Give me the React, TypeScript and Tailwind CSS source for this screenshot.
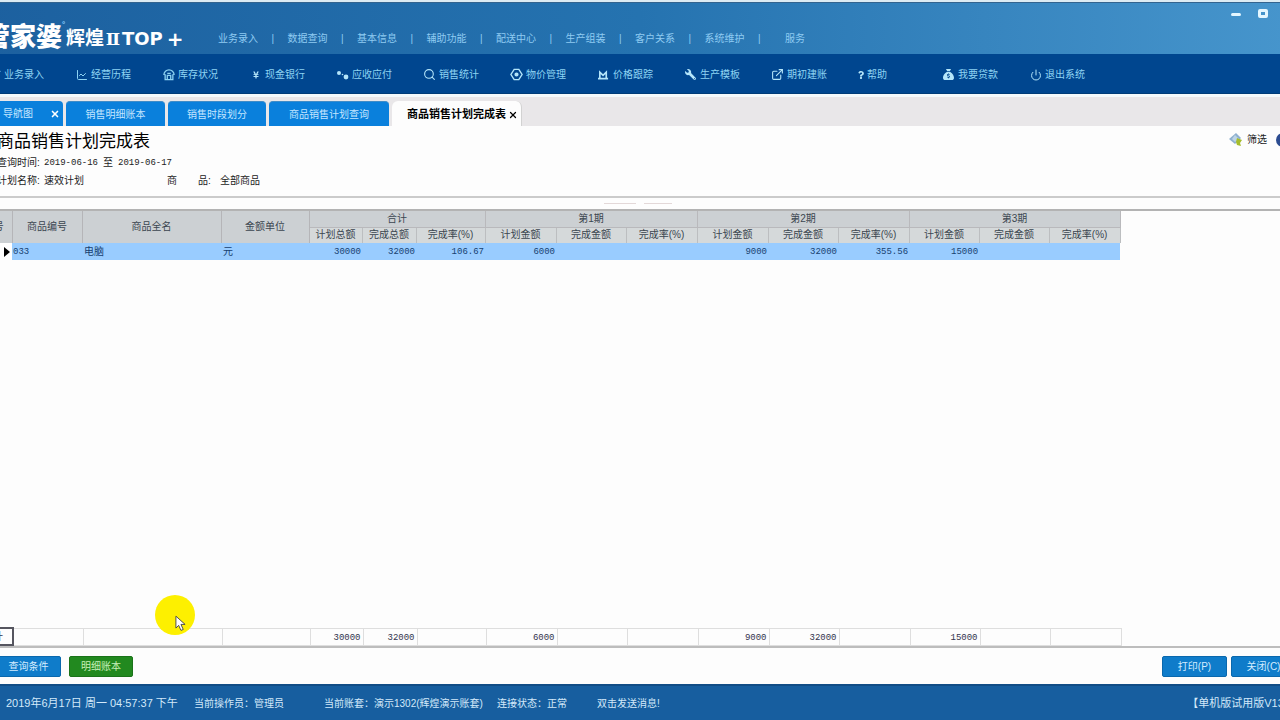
import React, { useState } from "react";
import { FaQuestion, FaWrench, FaYenSign } from "react-icons/fa";
import { FaSackDollar } from "react-icons/fa6";
import { ChartLine, ExternalLink, Pencil, Power, Search, X } from "lucide-react";

const menus = [
  "业务录入",
  "数据查询",
  "基本信息",
  "辅助功能",
  "配送中心",
  "生产组装",
  "客户关系",
  "系统维护",
];

function DotsIcon() {
  return (
    <svg viewBox="0 0 14 12" className="w-[14px] h-3" fill="currentColor">
      <circle cx="3" cy="4" r="2" />
      <circle cx="10" cy="8" r="2.4" />
      <circle cx="6.5" cy="5.5" r="0.8" />
    </svg>
  );
}

function HexIcon() {
  return (
    <svg
      viewBox="0 0 14 14"
      className="w-[13px] h-[13px]"
      fill="none"
      stroke="currentColor"
      strokeWidth="1.5"
    >
      <path d="M4.5 1.5 H9.5 L13 7 L9.5 12.5 H4.5 L1 7 Z" />
      <circle cx="7" cy="7" r="1.5" fill="currentColor" />
    </svg>
  );
}

function TrackIcon() {
  return (
    <svg
      viewBox="0 0 12 12"
      className="w-[11px] h-[11px]"
      fill="none"
      stroke="currentColor"
      strokeWidth="1.8"
    >
      <path d="M2 10 V3.5 L5.5 7 L9 3.5 V10 M0 10.5 H11" />
    </svg>
  );
}

function HomeIcon() {
  return (
    <svg
      viewBox="0 0 14 14"
      className="w-3 h-3"
      fill="none"
      stroke="currentColor"
      strokeWidth="1.5"
    >
      <path d="M1 7 C1 3.5 4 1 7 1 C10 1 13 3.5 13 7 M2.5 6 V12.5 H11.5 V6" />
      <path d="M5 12 V7.5 H9 V12 M5 5 H9" />
    </svg>
  );
}

const tools = [
  { label: "业务录入", icon: <Pencil className="w-3 h-3" /> },
  { label: "经营历程", icon: <ChartLine className="w-3 h-3" /> },
  { label: "库存状况", icon: <HomeIcon /> },
  { label: "现金银行", icon: <FaYenSign className="w-2 h-2" /> },
  { label: "应收应付", icon: <DotsIcon /> },
  { label: "销售统计", icon: <Search className="w-[13px] h-[13px]" /> },
  { label: "物价管理", icon: <HexIcon /> },
  { label: "价格跟踪", icon: <TrackIcon /> },
  { label: "生产模板", icon: <FaWrench className="w-[11px] h-[11px] -scale-x-100" /> },
  { label: "期初建账", icon: <ExternalLink className="w-[13px] h-[13px]" /> },
  { label: "帮助", icon: <FaQuestion className="w-2 h-2" />, narrow: true },
  { label: "我要贷款", icon: <FaSackDollar className="w-[11px] h-[11px]" /> },
  { label: "退出系统", icon: <Power className="w-3 h-3" /> },
];

const tabs = [
  { label: "销售明细账本", width: "w-[99px]" },
  { label: "销售时段划分", width: "w-[98px]" },
  { label: "商品销售计划查询", width: "w-[120px]" },
];

const groups = [
  { title: "合计", cols: ["计划总额", "完成总额", "完成率(%)"] },
  { title: "第1期", cols: ["计划金额", "完成金额", "完成率(%)"] },
  { title: "第2期", cols: ["计划金额", "完成金额", "完成率(%)"] },
  { title: "第3期", cols: ["计划金额", "完成金额", "完成率(%)"] },
];

const values = ["30000", "32000", "106.67", "6000", "", "", "9000", "32000", "355.56", "15000", "", ""];
const totals = ["30000", "32000", "", "6000", "", "", "9000", "32000", "", "15000", "", ""];

function Columns() {
  return (
    <colgroup>
      <col className="w-9" />
      <col className="w-[70px]" />
      <col className="w-[139px]" />
      <col className="w-[88px]" />
      <col className="w-[53px]" />
      <col className="w-[54px]" />
      <col className="w-[69px]" />
      <col className="w-[71px]" />
      <col className="w-[70px]" />
      <col className="w-[71px]" />
      <col className="w-[71px]" />
      <col className="w-[70px]" />
      <col className="w-[71px]" />
      <col className="w-[70px]" />
      <col className="w-[70px]" />
      <col className="w-[71px]" />
    </colgroup>
  );
}

function Header() {
  return (
    <header className="border-t-2 border-[#dcebf3]">
      <div className="h-[52px] flex items-start bg-linear-to-r from-[#1c609f] via-[#2573b0] to-[#4796cd] border-t border-[#33648f] text-white">
        <h1 className="flex items-center pl-2 pt-[18px] w-[242px] shrink-0 whitespace-nowrap leading-7 font-bold">
          <span className="text-[26px] font-black">管家婆</span>
          <span className="self-start w-1 text-[8px] leading-2 text-[#8fd0ff]">°</span>
          <span className="text-[19px] pt-1">辉煌</span>
          <span className="font-['DejaVu_Serif',serif] text-[17px] pt-1 w-[18px] text-center">
            Ⅱ
          </span>
          <span className="font-['DejaVu_Sans',sans-serif] text-[18px] pt-1">TOP</span>
          <span className="font-['DejaVu_Sans',sans-serif] text-[20px] pt-1 pl-1">+</span>
        </h1>
        <nav className="flex items-center pt-7 text-[#8fcbf2] leading-4">
          <ul className="grid grid-cols-8 w-[556px]">
            {menus.map((item) => (
              <li key={item} className="flex">
                <a href="#" className="whitespace-nowrap">
                  {item}
                </a>
                <span className="flex-1 text-center">|</span>
              </li>
            ))}
          </ul>
          <a href="#" className="pl-[11px]">
            服务
          </a>
        </nav>
        <div className="ml-auto flex gap-[17px] pt-[6px] pr-[9px] text-[#e3f6ff]">
          <button aria-label="最小化" className="w-[10px] h-[10px] flex items-center">
            <span className="w-full h-[3px] bg-current rounded-xs"></span>
          </button>
          <button
            aria-label="最大化"
            className="w-[10px] h-[9px] border-3 border-current rounded-xs"
          ></button>
          <button aria-label="关闭">
            <X className="w-[10px] h-[10px]" strokeWidth={4} />
          </button>
        </div>
      </div>

      {/* toolbar */}
      <div className="h-10 flex items-center pl-[11px] pt-[2px] bg-[#00468f] border-b border-[#003c78] text-[#8ed4f3]">
        {tools.map((tool, i) => (
          <button
            key={tool.label}
            className={`flex items-center gap-[2px] shrink-0 whitespace-nowrap ${
              tool.narrow ? "w-[84px]" : "w-[87px]"
            }`}
          >
            <span
              className={`flex items-center justify-center ${
                tool.narrow ? "w-2" : "w-[15px]"
              } ${i > 2 ? "text-[#b5e6fa]" : ""}`}
            >
              {tool.icon}
            </span>
            {tool.label}
          </button>
        ))}
      </div>
    </header>
  );
}

export default function App() {
  const [active, setActive] = useState("商品销售计划完成表");
  return (
    <div className="relative overflow-hidden font-['Liberation_Sans','Noto_Sans_CJK_SC',sans-serif] text-[10px] text-[#222]">
      <div className="-mx-6 min-h-screen flex flex-col bg-[#fdfdfd]">
        <Header />

        {/* tabs */}
        <div className="h-8 flex items-end gap-[3px] bg-[#e9e7e9] border-t-3 border-[#f4fafc]">
          <div className="w-[87px] h-[25px] flex items-center pl-[27px] pr-[3px] bg-[#0a80dc] text-[#c4e6ff] rounded-tr-sm">
            <button onClick={() => setActive("导航图")}>导航图</button>
            <button aria-label="关闭导航图" className="ml-auto text-white">
              <X className="w-[10px] h-[10px]" strokeWidth={4} />
            </button>
          </div>
          {tabs.map((tab) => (
            <button
              key={tab.label}
              onClick={() => setActive(tab.label)}
              className={`${tab.width} h-[25px] bg-[#0a80dc] text-[#c4e6ff] border-t border-[#3f8cc8] rounded-t-sm`}
            >
              {tab.label}
            </button>
          ))}
          <div className="w-[130px] h-[25px] flex items-center justify-end gap-[2px] pt-[2px] pr-[3px] bg-[#fdfdfd] border-r border-[#d2d2d2] rounded-t-md text-black">
            <button
              onClick={() => setActive("商品销售计划完成表")}
              aria-pressed={active === "商品销售计划完成表"}
              className="text-[11px] font-bold whitespace-nowrap"
            >
              商品销售计划完成表
            </button>
            <button aria-label="关闭商品销售计划完成表">
              <X className="w-[10px] h-[10px]" strokeWidth={3} />
            </button>
          </div>
        </div>

        {/* report title */}
        <section className="flex justify-between h-[72px] pl-[21px] pt-1 border-b-2 border-[#cbcbcb]">
          <div className="whitespace-nowrap">
            <h2 className="text-[17px] leading-6 text-black">商品销售计划完成表</h2>
            <p className="flex leading-[18px]">
              <span className="w-[47px]">查询时间:</span>
              <span className="font-['Liberation_Mono',monospace] text-[9px]">2019-06-16</span>
              <span className="px-[5px]">至</span>
              <span className="font-['Liberation_Mono',monospace] text-[9px]">2019-06-17</span>
            </p>
            <p className="flex leading-[18px]">
              <span className="w-[47px]">计划名称:</span>
              <span className="w-[123px]">速效计划</span>
              <span className="w-[31px]">商</span>
              <span className="w-[22px]">品:</span>
              <span>全部商品</span>
            </p>
          </div>
          <div className="flex items-start gap-[9px] pt-[2px] pr-[14px]">
            <button className="flex items-center gap-1 leading-4">
              <svg viewBox="0 0 14 14" className="w-[14px] h-[14px]">
                <path d="M7 0 L12 5 L6 11 L0 6 Z" fill="#8fb0cf" />
                <path d="M6 2 L10 6 L6 9 L3 6 Z" fill="#bcd4e6" />
                <path d="M8 5 L13 7 L11 10 L12 13 L8 12 L7 9 Z" fill="#a6bd2c" />
              </svg>
              筛选
            </button>
            <button
              aria-label="刷新"
              className="w-[14px] h-[14px] mt-px rounded-full bg-[#2c4c91]"
            ></button>
          </div>
        </section>
        <div className="h-[13px] flex justify-center items-center gap-2 pr-[5px] border-b-2 border-[#b3b3b3]">
          <span className="w-8 h-px bg-[#e3d8d8]"></span>
          <span className="w-7 h-px bg-[#e3d8d8]"></span>
        </div>

        {/* grid */}
        <main className="flex-1 flex flex-col justify-between border-b-2 border-[#bdbdbd]">
          <table className="table-fixed w-[1144px] border-collapse leading-3">
            <Columns />
            <thead className="bg-[#ccd0d3] text-[#3b4650]">
              <tr className="h-4">
                {["行号", "商品编号", "商品全名", "金额单位"].map((name) => (
                  <th key={name} rowSpan={2} className="p-0 font-normal border-r border-[#b5b5b8]">
                    {name}
                  </th>
                ))}
                {groups.map((g) => (
                  <th
                    key={g.title}
                    colSpan={3}
                    className="p-0 font-normal border-r border-b border-[#b9b9bc]"
                  >
                    {g.title}
                  </th>
                ))}
              </tr>
              <tr className="h-4 bg-[#d5d9da]">
                {groups.map((g) =>
                  g.cols.map((c) => (
                    <th
                      key={g.title + c}
                      className="p-0 font-normal whitespace-nowrap border-r border-[#bcbec0]"
                    >
                      {c}
                    </th>
                  ))
                )}
              </tr>
            </thead>
            <tbody>
              <tr className="h-[17px] bg-[#99ccff] text-[#173f70]">
                <td className="p-0 bg-white">
                  <svg viewBox="0 0 6 10" className="w-[6px] h-[10px] ml-auto mr-[2px]">
                    <path d="M0 0 L6 5 L0 10 Z" fill="#000" />
                  </svg>
                </td>
                <td className="p-0 pl-px font-['Liberation_Mono',monospace] text-[9px]">033</td>
                <td className="p-0 pl-[2px]">电脑</td>
                <td className="p-0 pl-[2px]">元</td>
                {values.map((v, i) => (
                  <td
                    key={i}
                    className="p-0 pr-px text-right font-['Liberation_Mono',monospace] text-[9px]"
                  >
                    {v}
                  </td>
                ))}
              </tr>
            </tbody>
          </table>

          <table className="table-fixed w-[1144px] border-collapse leading-3">
            <Columns />
            <tbody>
              <tr className="h-[17px] text-[#33334d]">
                <th className="p-0 pr-1 font-normal border-2 border-[#55555f]">合计</th>
                <td className="p-0 border border-[#dedede]"></td>
                <td className="p-0 border border-[#dedede]"></td>
                <td className="p-0 border border-[#dedede]"></td>
                {totals.map((v, i) => (
                  <td
                    key={i}
                    className="p-0 pt-[2px] pr-[2px] text-right border border-[#dedede] font-['Liberation_Mono',monospace] text-[9px]"
                  >
                    {v}
                  </td>
                ))}
              </tr>
            </tbody>
          </table>
        </main>

        {/* actions */}
        <div className="flex items-center h-9 pl-5 pr-2 text-[#d3ecff]">
          <button className="w-[65px] h-[21px] bg-[#0f7cca] border border-[#0a68ad] rounded-xs">
            查询条件
          </button>
          <button className="w-16 h-[21px] ml-2 bg-[#22891f] border border-[#1b731a] rounded-xs text-[#c9f0b8]">
            明细账本
          </button>
          <button className="w-[65px] h-[21px] ml-auto bg-[#0f7cca] border border-[#0a68ad] rounded-xs">
            打印(P)
          </button>
          <button className="w-[65px] h-[21px] ml-1 bg-[#0f7cca] border border-[#0a68ad] rounded-xs">
            关闭(C)
          </button>
        </div>

        {/* status bar */}
        <footer className="h-9 flex items-center pl-[30px] bg-[#175e9f] border-t-2 border-[#124d86] text-[#d3e9fa] whitespace-nowrap">
          <span className="w-[188px] text-[11px]">2019年6月17日 周一 04:57:37 下午</span>
          <span className="w-[130px]">当前操作员：管理员</span>
          <span className="w-[173px]">当前账套：演示1302(辉煌演示账套)</span>
          <span className="w-[100px]">连接状态：正常</span>
          <span>双击发送消息!</span>
          <span className="ml-auto text-[11px]">【单机版试用版V13.0】</span>
        </footer>
      </div>

      {/* pointer with highlight */}
      <div className="absolute left-[155px] bottom-[85px] w-10 h-10 rounded-full bg-[#fdf000] pointer-events-none">
        <svg viewBox="0 0 12 18" className="absolute left-5 top-5 w-[11px] h-[17px]">
          <path
            d="M1 1 V14 L4 11 L6.5 16.5 L9 15.5 L6.5 10 H11 Z"
            fill="#fff"
            stroke="#444"
            strokeWidth="1"
          />
        </svg>
      </div>
    </div>
  );
}
